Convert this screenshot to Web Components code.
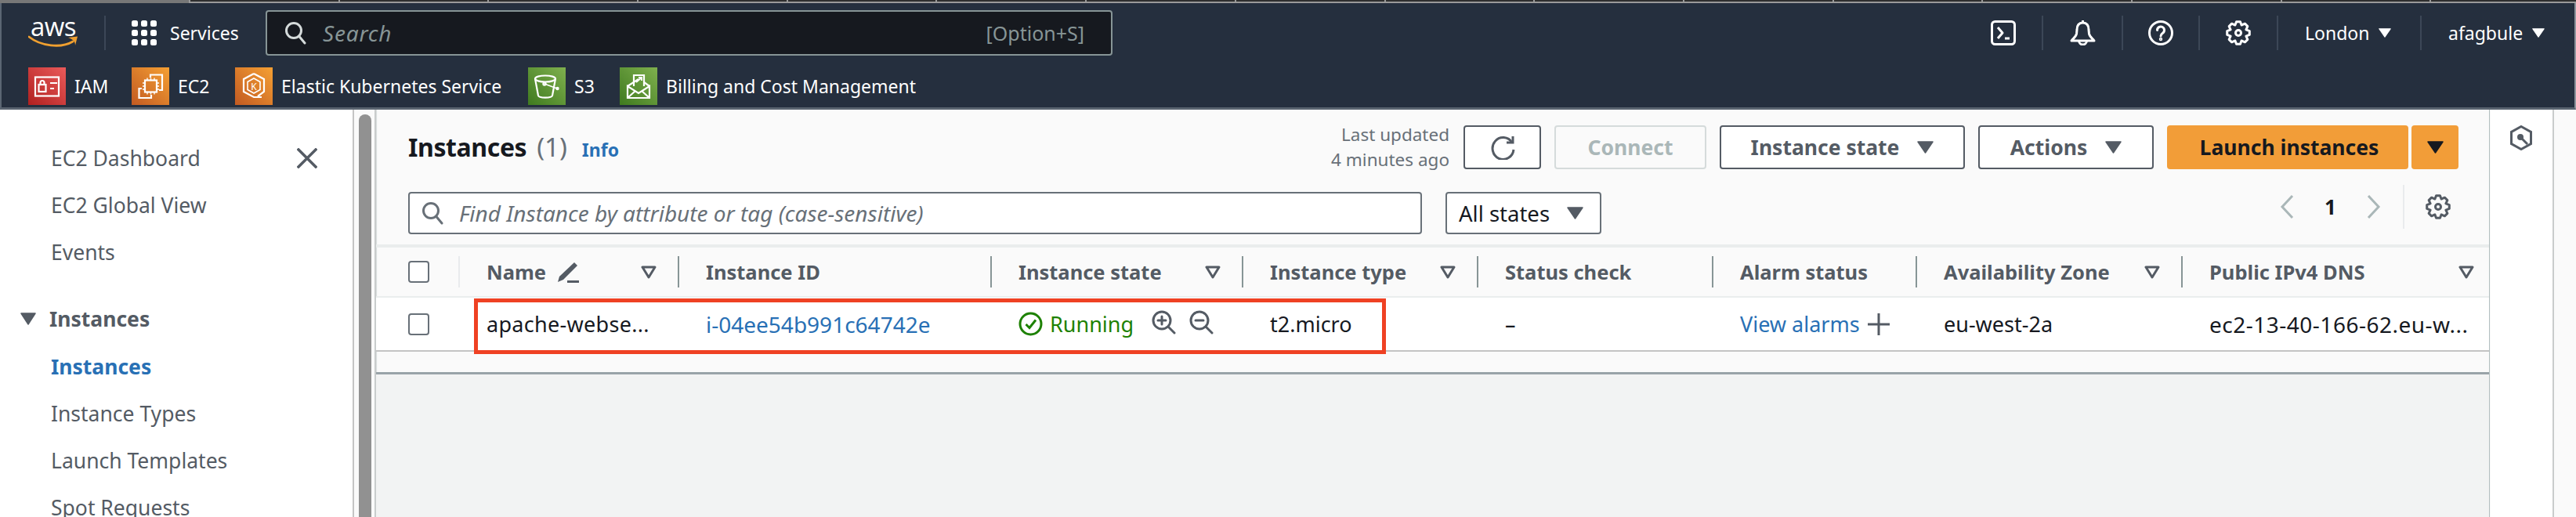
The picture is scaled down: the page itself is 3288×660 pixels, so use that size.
<!doctype html>
<html>
<head>
<meta charset="utf-8">
<title>Instances | EC2</title>
<style>
  html, body { margin: 0; height: 100%; overflow: hidden; background: #fff; }
  body { font-family: "Noto Sans", "Open Sans", sans-serif; }
</style>
</head>
<body>
<aws-console></aws-console>
<script>
const gearPath = (size) => {
  const c = size / 2
  const R = c - 1.5
  const r = R * 0.74
  let d = ''
  for (let i = 0; i < 8; i++) {
    const a = i * Math.PI / 4
    const pts = [[r, a - 0.39], [R, a - 0.17], [R, a + 0.17], [r, a + 0.39]]
    pts.forEach(([rad, t], j) => {
      d += `${i === 0 && j === 0 ? 'M' : 'L'}${(c + rad * Math.cos(t)).toFixed(2)} ${(c + rad * Math.sin(t)).toFixed(2)} `
    })
  }
  return d + 'Z'
}

const icon = {
  caret: (w, h, color) => `<svg width="${w}" height="${h}" viewBox="0 0 21 16" preserveAspectRatio="none"><path d="M1 1 H20 L10.5 15 Z" fill="${color}" stroke="${color}" stroke-width="1.5" stroke-linejoin="round"/></svg>`,
  filter: `<svg width="20" height="17" viewBox="0 0 20 17"><path d="M2 2 H18 L10 15 Z" fill="none" stroke="#545b64" stroke-width="3" stroke-linejoin="round"/></svg>`,
  search: (color) => `<svg width="30" height="30" viewBox="0 0 30 30" fill="none" stroke="${color}" stroke-width="3" stroke-linecap="round"><circle cx="13" cy="12" r="9.5"/><path d="M19.5 19 L27 28"/></svg>`,
  gear: (color) => `<svg width="32" height="32" viewBox="0 0 32 32" fill="none" stroke="${color}" stroke-width="3" stroke-linejoin="round"><path d="${gearPath(32)}"/><circle cx="16" cy="16" r="3.5"/></svg>`
}

class TopStrip extends HTMLElement {
  constructor() {
    super()
    this.attachShadow({ mode: 'open' })
    this.shadowRoot.innerHTML = `
      <style>
        :host { display: block; height: 4px; background: #2f2f2f; overflow: hidden; }
        .tabs { display: flex; height: 4px; }
        .tab { width: 188.7px; flex: none; height: 4px; background: linear-gradient(#2f2f2f 2px, #9a9a9a 2px); border-left: 2px solid #9a9a9a; }
        .tab:first-child { width: 241px; border-left: 0; background: #777; }
      </style>
      <div class="tabs">${'<div class="tab"></div>'.repeat(17)}</div>
    `
  }
}

class FavItem extends HTMLElement {
  constructor() {
    super()
    this.attachShadow({ mode: 'open' })
    const from = this.getAttribute('from')
    const to = this.getAttribute('to')
    const id = this.getAttribute('label').replace(/\W/g, '')
    this.shadowRoot.innerHTML = `
      <style>
        :host { display: flex; align-items: center; gap: 11px; font-size: 23px; color: #fff; white-space: nowrap; }
        svg { display: block; flex: none; }
      </style>
      <svg width="48" height="48" viewBox="0 0 48 48" fill="none" stroke="#fff" stroke-width="2.2">
        <defs><linearGradient id="${id}" x1="0" y1="1" x2="1" y2="0"><stop offset="0" stop-color="${from}"/><stop offset="1" stop-color="${to}"/></linearGradient></defs>
        <rect width="48" height="48" fill="url(#${id})" stroke="none"/>
        ${FavItem.glyphs[this.getAttribute('glyph')]}
      </svg>
      <span>${this.getAttribute('label')}</span>
    `
  }
}
FavItem.glyphs = {
  iam: `<rect x="9" y="12.5" width="30" height="24"/><rect x="13.5" y="22" width="9" height="9"/><path d="M15.5 22 v-2.5 a2.5 2.5 0 0 1 5 0 V22 M28 20 H37 M28 27 H33"/>`,
  ec2: `<path d="M24 13 V9.5 H39 V29 H35 M13 27 H9.5 V39 H25 V35"/><rect x="17" y="16.5" width="15" height="15"/><path d="M20 13.5v3M24.5 13.5v3M29 13.5v3M20 31.5v3M24.5 31.5v3M29 31.5v3M14 20h3M14 24h3M14 28h3M32 20h3M32 24h3M32 28h3" stroke-width="1.4"/>`,
  eks: `<path d="M24 8 L37 15 V31 L29 37 M24 8 L11 15 V31 L24 38 L34 38"/><path d="M24 14 L32 18.5 V28.5 L24 33 L16 28.5 V18.5 Z" stroke-width="1.6"/><text x="24" y="28.5" text-anchor="middle" font-size="12" fill="#fff" stroke="none" font-family="Noto Sans">K</text>`,
  s3: `<ellipse cx="22" cy="14.5" rx="13" ry="4"/><path d="M9 14.5 L13 36 C14 39.5 30 39.5 31 36 L35 14.5"/><path d="M21 21 L37 27" stroke-width="1.6"/><circle cx="37.5" cy="27" r="2.2" fill="#fff" stroke="none"/><circle cx="21" cy="21" r="1.6"/>`,
  billing: `<path d="M18 24 V10 H31 V24"/><path d="M21 19 L28 13 M24 13 H28 V17" stroke-width="1.8"/><path d="M10 24 L24 15 M38 24 L31 19 M10 24 V39 H38 V24 L24 33 Z M10 39 L20 30 M38 39 L28 30"/>`
}

class NavUtil extends HTMLElement {
  constructor() {
    super()
    this.attachShadow({ mode: 'open' })
    this.shadowRoot.innerHTML = `
      <style>
        :host { display: flex; align-items: center; justify-content: center; height: 44px; gap: 12px; color: #fff; font-size: 23px; border-right: 2px solid #3c4757; box-sizing: border-box; white-space: nowrap; }
        :host([text]) { justify-content: flex-start; padding-left: 34px; }
        :host([last]) { border-right: 0; }
        svg { display: block; }
      </style>
      <slot></slot>
    `
  }
}

class TopNav extends HTMLElement {
  constructor() {
    super()
    this.attachShadow({ mode: 'open' })
    this.shadowRoot.innerHTML = `
      <style>
        :host { display: block; height: 136px; box-sizing: border-box; background: #252f3e; border-left: 2px solid #5b6673; border-right: 2px solid #8d949c; border-bottom: 3px solid #59636f; }
        .row { display: flex; align-items: center; }
        .top { height: 76px; padding-left: 34px; }
        .fav { height: 48px; margin-top: 6px; padding-left: 34px; gap: 0; }
        .logo { width: 64px; height: 44px; margin-top: 2px; flex: none; display: flex; flex-direction: column; align-items: center; }
        .logo span { font-family: "Open Sans", sans-serif; font-size: 33px; line-height: 26px; height: 26px; letter-spacing: -0.5px; color: #fff; }
        .logo svg { display: block; margin-top: -2px; }
        .sep { width: 2px; height: 44px; background: #3c4757; margin: 0 33px 0 33px; flex: none; }
        .grid { display: grid; grid-template-columns: repeat(3, 8px); gap: 4px; flex: none; }
        .grid i { width: 8px; height: 8px; background: #fff; border-radius: 2.5px; }
        .services { color: #fff; font-size: 23px; margin-left: 17px; width: 122px; flex: none; }
        .search { width: 1081px; height: 58px; box-sizing: border-box; flex: none; border: 2px solid #879596; border-radius: 4px; background: #16191f; display: flex; align-items: center; padding: 0 34px 0 21px; color: #879596; font-size: 28px; font-style: italic; letter-spacing: 0.8px; }
        .search span { margin-left: 20px; }
        .search b { margin-left: auto; font-weight: 400; font-style: normal; font-size: 25px; letter-spacing: 0; }
        .utils { margin-left: auto; display: grid; grid-template-columns: 100px 102px 98px 100px 183px 161px; align-items: center; padding-right: 34px; }
        .fav fav-item:nth-child(1) { width: 132px; }
        .fav fav-item:nth-child(2) { width: 132px; }
        .fav fav-item:nth-child(3) { width: 374px; }
        .fav fav-item:nth-child(4) { width: 117px; }
      </style>
      <div class="row top">
        <div class="logo">
          <span>aws</span>
          <svg width="64" height="16" viewBox="0 0 64 16" fill="none"><path d="M1 2 C16 14 42 17 57 8" stroke="#f0a030" stroke-width="2.8" stroke-linecap="round"/><path d="M51 3 L63 1.5 L60 13 C60 8 57 5 51 3 Z" fill="#f0a030"/></svg>
        </div>
        <div class="sep"></div>
        <div class="grid">${'<i></i>'.repeat(9)}</div>
        <div class="services">Services</div>
        <div class="search">
          ${icon.search('#d5dbdb')}
          <span>Search</span>
          <b>[Option+S]</b>
        </div>
        <div class="utils">
          <nav-util><svg width="32" height="32" viewBox="0 0 32 32" fill="none" stroke="#fff" stroke-width="3" stroke-linejoin="round"><rect x="1.5" y="1.5" width="29" height="29" rx="4"/><path d="M9 9 L15 16 L9 23"/><path d="M18 23 H24"/></svg></nav-util>
          <nav-util><svg width="33" height="32" viewBox="0 0 33 32" fill="none" stroke="#fff" stroke-width="3" stroke-linejoin="round"><path d="M16.5 3 C11 3 9 7 9 12 L8.5 17 C8 21 4 23 2 26 H31 C29 23 25 21 24.500 17 L24 12 C24 7 22 3 16.500 3 Z"/><path d="M16.500 0 V3"/><path d="M11.500 26 a5 5 0 0 0 10 0"/></svg></nav-util>
          <nav-util><svg width="32" height="32" viewBox="0 0 32 32" fill="none" stroke="#fff" stroke-width="3" stroke-linecap="round"><circle cx="16" cy="16" r="14.500"/><path d="M11.500 12.500 a4.500 4.500 0 1 1 7 3.700 c-1.800 1.200 -2.500 2 -2.500 3.800"/><circle cx="16" cy="24" r="0.700" fill="#fff"/></svg></nav-util>
          <nav-util>${icon.gear('#fff')}</nav-util>
          <nav-util text>London ${icon.caret(16, 12, '#fff')}</nav-util>
          <nav-util text last>afagbule ${icon.caret(16, 12, '#fff')}</nav-util>
        </div>
      </div>
      <div class="row fav">
        <fav-item label="IAM" glyph="iam" from="#b0201f" to="#ea5a5a"></fav-item>
        <fav-item label="EC2" glyph="ec2" from="#c25a22" to="#f5a033"></fav-item>
        <fav-item label="Elastic Kubernetes Service" glyph="eks" from="#c25a22" to="#f5a033"></fav-item>
        <fav-item label="S3" glyph="s3" from="#3f7a1f" to="#7fb04e"></fav-item>
        <fav-item label="Billing and Cost Management" glyph="billing" from="#3f7a1f" to="#7fb04e"></fav-item>
      </div>
    `
  }
}

class SideNav extends HTMLElement {
  constructor() {
    super()
    this.attachShadow({ mode: 'open' })
    this.shadowRoot.innerHTML = `
      <style>
        :host { display: block; width: 452px; flex: none; box-sizing: border-box; height: 100%; background: #fff; border-right: 2px solid #c4c4c4; padding-top: 32px; overflow: hidden; color: #545b64; font-size: 26.5px; }
        .item { height: 60px; display: flex; align-items: center; padding-left: 65px; white-space: nowrap; }
        .first { justify-content: space-between; padding-right: 45px; }
        .head { margin-top: 23px; height: 63px; padding-left: 26px; font-weight: 700; gap: 17px; }
        .active { color: #2870b5; font-weight: 700; }
        svg { display: block; flex: none; }
      </style>
      <div class="item first">EC2 Dashboard
        <svg width="26" height="26" viewBox="0 0 26 26" stroke="#545b64" stroke-width="3.500" stroke-linecap="square"><path d="M2 2 L24 24 M24 2 L2 24"/></svg>
      </div>
      <div class="item">EC2 Global View</div>
      <div class="item">Events</div>
      <div class="item head">${icon.caret(20, 16, '#545b64')}Instances</div>
      <div class="item active">Instances</div>
      <div class="item">Instance Types</div>
      <div class="item">Launch Templates</div>
      <div class="item">Spot Requests</div>
    `
  }
}

class ScrollRail extends HTMLElement {
  constructor() {
    super()
    this.attachShadow({ mode: 'open' })
    this.shadowRoot.innerHTML = `
      <style>
        :host { display: block; width: 28px; flex: none; box-sizing: border-box; height: 100%; background: #fafafa; border-right: 2px solid #c9cccc; padding: 6px 0 0 6px; }
        .thumb { width: 16px; height: 100%; background: #919191; border-radius: 8px 8px 0 0; }
      </style>
      <div class="thumb"></div>
    `
  }
}

class AwsButton extends HTMLElement {
  constructor() {
    super()
    this.attachShadow({ mode: 'open' })
    this.shadowRoot.innerHTML = `
      <style>
        :host { display: flex; align-items: center; justify-content: center; flex: none; gap: 23px; box-sizing: border-box; height: 56px; background: #fff; border: 2px solid #545b64; border-radius: 4px; color: #545b64; font-weight: 700; font-size: 26.5px; white-space: nowrap; }
        :host([variant=off]) { border-color: #d5dbdb; color: #aab7b8; background: #fafafa; }
        :host([variant=plain]) { font-weight: 400; color: #16191f; border-color: #687078; height: 54px; font-size: 27.5px; justify-content: flex-start; padding-left: 15px; gap: 22px; }
        :host([variant=primary]) { border: 0; background: #f29d38; color: #16191f; }
        svg { display: block; }
      </style>
      <slot></slot>
    `
  }
}

class TableHead extends HTMLElement {
  constructor() {
    super()
    this.attachShadow({ mode: 'open' })
    this.shadowRoot.innerHTML = `
      <style>
        :host { display: flex; align-items: center; box-sizing: border-box; height: 40px; padding: 0 27px 0 34px; border-right: 2px solid #879596; color: #545b64; font-weight: 700; font-size: 25.5px; white-space: nowrap; }
        :host([last]) { border-right: 0; padding-right: 19px; }
        .f { margin-left: auto; display: flex; }
      </style>
      <slot></slot>
      ${this.hasAttribute('sortable') ? `<span class="f">${icon.filter}</span>` : ''}
    `
  }
}

class TableCell extends HTMLElement {
  constructor() {
    super()
    this.attachShadow({ mode: 'open' })
    this.shadowRoot.innerHTML = `
      <style>
        :host { display: flex; align-items: center; padding-left: 34px; color: #16191f; font-size: 27px; white-space: nowrap; }
        :host([link]) { color: #2870b5; }
        :host([mono]) { font-size: 28px; }
        svg { display: block; flex: none; }
      </style>
      <slot></slot>
    `
  }
}

class CheckBox extends HTMLElement {
  constructor() {
    super()
    this.attachShadow({ mode: 'open' })
    this.shadowRoot.innerHTML = `
      <style>
        :host { display: block; width: 27px; height: 28px; box-sizing: border-box; border: 2px solid #687078; border-radius: 4px; background: #fff; margin-left: 41px; }
      </style>
    `
  }
}

class InstancesPanel extends HTMLElement {
  constructor() {
    super()
    this.attachShadow({ mode: 'open' })
    const zoom = (inner) => `<svg width="31" height="31" viewBox="0 0 31 31" fill="none" stroke="#545b64" stroke-width="3" stroke-linecap="round"><circle cx="13" cy="13" r="11"/><path d="M21 21 L29 29"/><path d="${inner}"/></svg>`
    this.shadowRoot.innerHTML = `
      <style>
        :host { display: block; position: relative; flex: none; width: 2697px; height: 338px; box-sizing: border-box; background: #fafafa; border-bottom: 3px solid #99a3a8; box-shadow: inset 2px 0 1px -1px #d5dbdb; }
        .row1 { display: flex; align-items: center; height: 56px; padding: 20px 39px 0 41px; }
        .title { font-size: 32px; font-weight: 700; color: #16191f; white-space: nowrap; letter-spacing: -0.4px; margin-top: -2px; }
        .title span { font-size: 33px; font-weight: 400; color: #687078; margin-left: 5px; letter-spacing: 0; }
        .info { font-size: 23px; font-weight: 700; color: #2870b5; margin-left: 19px; margin-top: 5px; }
        .updated { margin-left: auto; margin-right: 18px; text-align: right; font-size: 22.500px; line-height: 32px; color: #687078; white-space: nowrap; }
        .actions { display: flex; gap: 17px; }
        .launch { display: flex; gap: 4px; }
        .row2 { display: flex; align-items: center; height: 54px; margin-top: 29px; padding: 0 39px 0 41px; }
        .find { width: 1294px; height: 54px; box-sizing: border-box; border: 2px solid #687078; border-radius: 4px; background: #fff; display: flex; align-items: center; padding-left: 14px; font-size: 28px; font-style: italic; color: #687078; white-space: nowrap; }
        .find span { margin-left: 19px; }
        .pager { margin-left: auto; display: grid; grid-template-columns: 18px 41px 18px; column-gap: 26px; align-items: center; justify-items: center; color: #16191f; font-size: 26px; font-weight: 700; height: 56px; padding-right: 28px; border-right: 2px solid #e9ebed; margin-top: -17px; }
        .gear { margin: -17px 10px 0 27px; display: block; height: 32px; }
        svg { display: block; }
        .table { margin-top: 13px; border-top: 4px solid #eaeded; }
        .cols { display: grid; grid-template-columns: 107px 280px 399px 321px 300px 300px 260px 339px 391px; }
        .headrow { height: 62px; align-items: center; }
        .datarow { height: 67px; background: #fff; border-top: 2px solid #eaeded; border-bottom: 2px solid #c4c4c4; align-items: center; }
        .check-head { display: flex; align-items: center; height: 40px; border-right: 2px solid #e9ebed; box-sizing: border-box; }
        .run { color: #1d8102; margin-left: 9px; }
        .z1 { margin-left: 23px; margin-top: -5px; }
        .z2 { margin-left: 17px; margin-top: -5px; }
        .mark { position: absolute; left: 125px; top: 241px; width: 1164px; height: 71px; box-sizing: border-box; border: 5px solid #ef4123; pointer-events: none; }
      </style>
      <div class="row1">
        <div class="title">Instances <span>(1)</span></div>
        <div class="info">Info</div>
        <div class="updated">Last updated<br>4 minutes ago</div>
        <div class="actions">
          <aws-button style="width:99px"><svg width="32" height="32" viewBox="0 0 32 32" fill="none" stroke="#545b64" stroke-width="3"><path d="M28 10 A13.500 14 0 1 0 30 19"/><path d="M29 2 V10 H21"/></svg></aws-button>
          <aws-button style="width:194px" variant="off">Connect</aws-button>
          <aws-button style="width:313px">Instance state ${icon.caret(21, 16, '#545b64')}</aws-button>
          <aws-button style="width:224px">Actions ${icon.caret(21, 16, '#545b64')}</aws-button>
          <div class="launch">
            <aws-button style="width:308px;padding-left:4px" variant="primary">Launch instances</aws-button>
            <aws-button style="width:60px" variant="primary">${icon.caret(21, 16, '#16191f')}</aws-button>
          </div>
        </div>
      </div>
      <div class="row2">
        <div class="find">${icon.search('#687078')}<span>Find Instance by attribute or tag (case-sensitive)</span></div>
        <aws-button style="width:199px;margin-left:30px" variant="plain">All states ${icon.caret(21, 16, '#545b64')}</aws-button>
        <div class="pager">
          <svg width="18" height="32" viewBox="0 0 18 32" fill="none" stroke="#aab7b8" stroke-width="3"><path d="M16 2 L3 16 L16 30"/></svg>
          <span>1</span>
          <svg width="18" height="32" viewBox="0 0 18 32" fill="none" stroke="#aab7b8" stroke-width="3"><path d="M2 2 L15 16 L2 30"/></svg>
        </div>
        <span class="gear">${icon.gear('#545b64')}</span>
      </div>
      <div class="table">
        <div class="cols headrow">
          <div class="check-head"><check-box></check-box></div>
          <table-head sortable>Name&nbsp;<svg width="30" height="28" viewBox="0 0 30 28" style="margin-left:6px"><path d="M23 2 L27 6 L9 24 L2 27 L4 20 Z" fill="#545b64"/><path d="M14 26.500 H29" stroke="#545b64" stroke-width="3"/></svg></table-head>
          <table-head>Instance ID</table-head>
          <table-head sortable>Instance state</table-head>
          <table-head sortable>Instance type</table-head>
          <table-head>Status check</table-head>
          <table-head>Alarm status</table-head>
          <table-head sortable>Availability Zone</table-head>
          <table-head sortable last>Public IPv4 DNS</table-head>
        </div>
        <div class="cols datarow">
          <div><check-box></check-box></div>
          <table-cell style="letter-spacing:.3px">apache-webse...</table-cell>
          <table-cell link mono>i-04ee54b991c64742e</table-cell>
          <table-cell>
            <svg width="31" height="31" viewBox="0 0 31 31" fill="none" stroke="#1d8102" stroke-width="3"><circle cx="15.500" cy="15.500" r="13.500"/><path d="M9.500 16 L14 20.500 L22 10.500"/></svg>
            <span class="run">Running</span>
            <span class="z1">${zoom('M13 8 V18 M8 13 H18')}</span>
            <span class="z2">${zoom('M8 13 H18')}</span>
          </table-cell>
          <table-cell>t2.micro</table-cell>
          <table-cell>–</table-cell>
          <table-cell link>View alarms<svg width="28" height="28" viewBox="0 0 28 28" stroke="#545b64" stroke-width="3" style="margin-left:10px"><path d="M14 0 V28 M0 14 H28"/></svg></table-cell>
          <table-cell>eu-west-2a</table-cell>
          <table-cell mono style="letter-spacing:.5px">ec2-13-40-166-62.eu-w...</table-cell>
        </div>
      </div>
      <div class="mark"></div>
    `
  }
}

class RightRail extends HTMLElement {
  constructor() {
    super()
    this.attachShadow({ mode: 'open' })
    this.shadowRoot.innerHTML = `
      <style>
        :host { display: block; width: 83px; flex: none; box-sizing: border-box; height: 100%; background: #fff; border-right: 2px solid #c9cccc; box-shadow: inset 2px 0 1px -1px #aab7b8; padding: 20px 0 0 27px; }
        svg { display: block; }
      </style>
      <svg width="28" height="32" viewBox="0 0 28 32" fill="none" stroke="#545b64" stroke-width="3"><path d="M14 1.500 L26.500 8.500 V23.500 L14 30.500 L1.500 23.500 V8.500 Z"/><circle cx="13" cy="15" r="4" fill="#545b64" stroke="none"/><path d="M13 15 L22 24"/></svg>
    `
  }
}

class AwsConsole extends HTMLElement {
  constructor() {
    super()
    this.attachShadow({ mode: 'open' })
    this.shadowRoot.innerHTML = `
      <style>
        :host { display: flex; flex-direction: column; height: 660px; width: 3288px; overflow: hidden; }
        .body { display: flex; flex: 1; min-height: 0; }
        .main { flex: none; width: 2808px; height: 100%; display: flex; background: #fafafa; }
        .canvas { flex: none; width: 2697px; height: 100%; background: #f2f3f3; }
      </style>
      <top-strip></top-strip>
      <top-nav></top-nav>
      <div class="body">
        <side-nav></side-nav>
        <scroll-rail></scroll-rail>
        <div class="main">
          <div class="canvas"><instances-panel></instances-panel></div>
          <right-rail></right-rail>
        </div>
      </div>
    `
  }
}

customElements.define('top-strip', TopStrip)
customElements.define('fav-item', FavItem)
customElements.define('nav-util', NavUtil)
customElements.define('top-nav', TopNav)
customElements.define('side-nav', SideNav)
customElements.define('scroll-rail', ScrollRail)
customElements.define('aws-button', AwsButton)
customElements.define('table-head', TableHead)
customElements.define('table-cell', TableCell)
customElements.define('check-box', CheckBox)
customElements.define('instances-panel', InstancesPanel)
customElements.define('right-rail', RightRail)
customElements.define('aws-console', AwsConsole)
</script>
</body>
</html>
